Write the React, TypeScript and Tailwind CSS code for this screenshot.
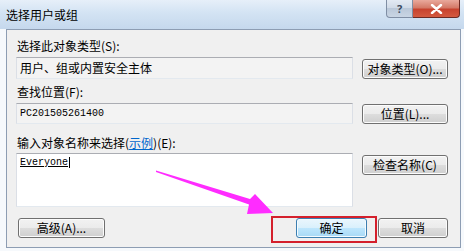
import React from "react";
import clsx from "clsx";

const cjk = "font-['Noto_Sans_CJK_SC',sans-serif]";
const mono = "font-['Liberation_Mono',monospace]";

interface BtnProps {
  children: React.ReactNode;
  className?: string;
  primary?: boolean;
}

const Btn: React.FC<BtnProps> = ({ children, className, primary }) => {
  return (
    <div
      className={clsx(
        "flex h-[20px] items-center justify-center rounded-[3px] border text-[12px] leading-none text-black",
        cjk,
        primary
          ? "border-[#3c7fb1] bg-[linear-gradient(to_bottom,#eaf6fd_0%,#d9f0fc_50%,#bee6fd_50%,#a7d9f5_100%)] shadow-[inset_0_0_0_1px_#f4fbff]"
          : "border-[#707070] bg-[linear-gradient(to_bottom,#f2f2f2_0%,#ebebeb_50%,#dddddd_50%,#cfcfcf_100%)] shadow-[inset_0_0_0_1px_#fcfcfc]",
        className
      )}
    >
      {children}
    </div>
  );
};

const Label: React.FC<{ children: React.ReactNode; className?: string }> = ({ children, className }) => (
  <div className={clsx("ml-[1px] h-[12px] text-[12px] leading-[12px] text-black whitespace-nowrap", cjk, className)}>
    {children}
  </div>
);

const ReadOnlyBox: React.FC<{ children: React.ReactNode; className?: string }> = ({ children, className }) => (
  <div
    className={clsx(
      "flex w-[337px] items-center border border-t-[#abadb3] border-x-[#dbdfe6] border-b-[#e3e9ef] bg-[#f3f3f3] pl-[3px]",
      className
    )}
  >
    {children}
  </div>
);

const App: React.FC = () => {
  return (
    <div className="relative h-[251px] w-[464px] overflow-hidden bg-[#f6f9fc]">
      {/* title bar */}
      <div className="flex h-[29px] items-start justify-between bg-[linear-gradient(to_bottom,#e6eff9_0%,#d3e3f3_45%,#c5d8ed_100%)] pr-[4px]">
        <div className={clsx("pl-[6px] pt-[8px] text-[12px] leading-[13px] text-black", cjk)}>选择用户或组</div>
        <div className="flex">
          <div className="flex h-[18px] w-[27px] items-center justify-center rounded-bl-[4px] border border-t-0 border-[#7f8ea4] bg-[linear-gradient(to_bottom,#e3eaf3_0%,#cfd9e6_50%,#bac8d9_50%,#c9d5e4_100%)] text-[11px] font-bold leading-none text-[#3a4a5e]">
            ?
          </div>
          <div className="flex h-[18px] w-[47px] items-center justify-center rounded-br-[4px] border border-l-0 border-t-0 border-[#6b2a24] bg-[linear-gradient(to_bottom,#e9a99c_0%,#d47a68_45%,#c7432f_55%,#d45a40_100%)]">
            <svg width="13" height="10" viewBox="0 0 13 10">
              <path d="M2 1 L11 9 M11 1 L2 9" stroke="#ffffff" strokeWidth="2.4" strokeLinecap="round" />
            </svg>
          </div>
        </div>
      </div>

      {/* client area */}
      <div className="ml-[6px] mr-[3px] flex flex-col border border-[#8d9db3] bg-[#f0f0f0] pb-[9px] pl-[9px] pr-[12px] pt-[10px]">
        <Label>选择此对象类型(S):</Label>

        <div className="mt-[5px] flex items-start justify-between">
          <ReadOnlyBox className="h-[22px]">
            <span className={clsx("text-[12px] leading-none text-black", cjk)}>用户、组或内置安全主体</span>
          </ReadOnlyBox>
          <Btn className="mt-[2px] w-[86px]">对象类型(O)...</Btn>
        </div>

        <Label className="mt-[7px]">查找位置(F):</Label>

        <div className="mt-[5px] flex items-start justify-between">
          <ReadOnlyBox className="h-[21px]">
            <span className={clsx("text-[10px] leading-none text-black", mono)}>PC201505261400</span>
          </ReadOnlyBox>
          <Btn className="mt-[1px] w-[86px]">位置(L)...</Btn>
        </div>

        <Label className="mt-[13px]">
          输入对象名称来选择(<span className="text-[#0066cc] underline">示例</span>)(E):
        </Label>

        <div className="mt-[4px] flex items-start justify-between">
          <div className="flex h-[54px] w-[337px] items-start border border-t-[#abadb3] border-x-[#dbdfe6] border-b-[#e3e9ef] bg-white pl-[3px] pt-[3px]">
            <span className={clsx("text-[10px] leading-[11px] text-black underline", mono)}>Everyone</span>
            <span className="ml-[1px] h-[11px] w-[1px] bg-black" />
          </div>
          <Btn className="mt-[2px] w-[86px]">检查名称(C)</Btn>
        </div>

        <div className="mt-[11px] flex items-center justify-between">
          <Btn className="ml-[2px] w-[87px]">高级(A)...</Btn>
          <div className="flex gap-[11px]">
            <Btn primary className="w-[71px]">
              确定
            </Btn>
            <Btn className="w-[70px]">取消</Btn>
          </div>
        </div>
      </div>

      {/* red highlight box */}
      <div className="absolute left-[271px] top-[216px] h-[27px] w-[106px] border-2 border-[#d4202c]" />

      {/* magenta arrow */}
      <svg className="pointer-events-none absolute left-0 top-0" width="464" height="251" viewBox="0 0 464 251">
        <polygon
          points="156,170.5 250,199 255,194 273,213 247,214 249,204.5 156,172"
          fill="#ff2cff"
        />
      </svg>
    </div>
  );
};

export default App;
